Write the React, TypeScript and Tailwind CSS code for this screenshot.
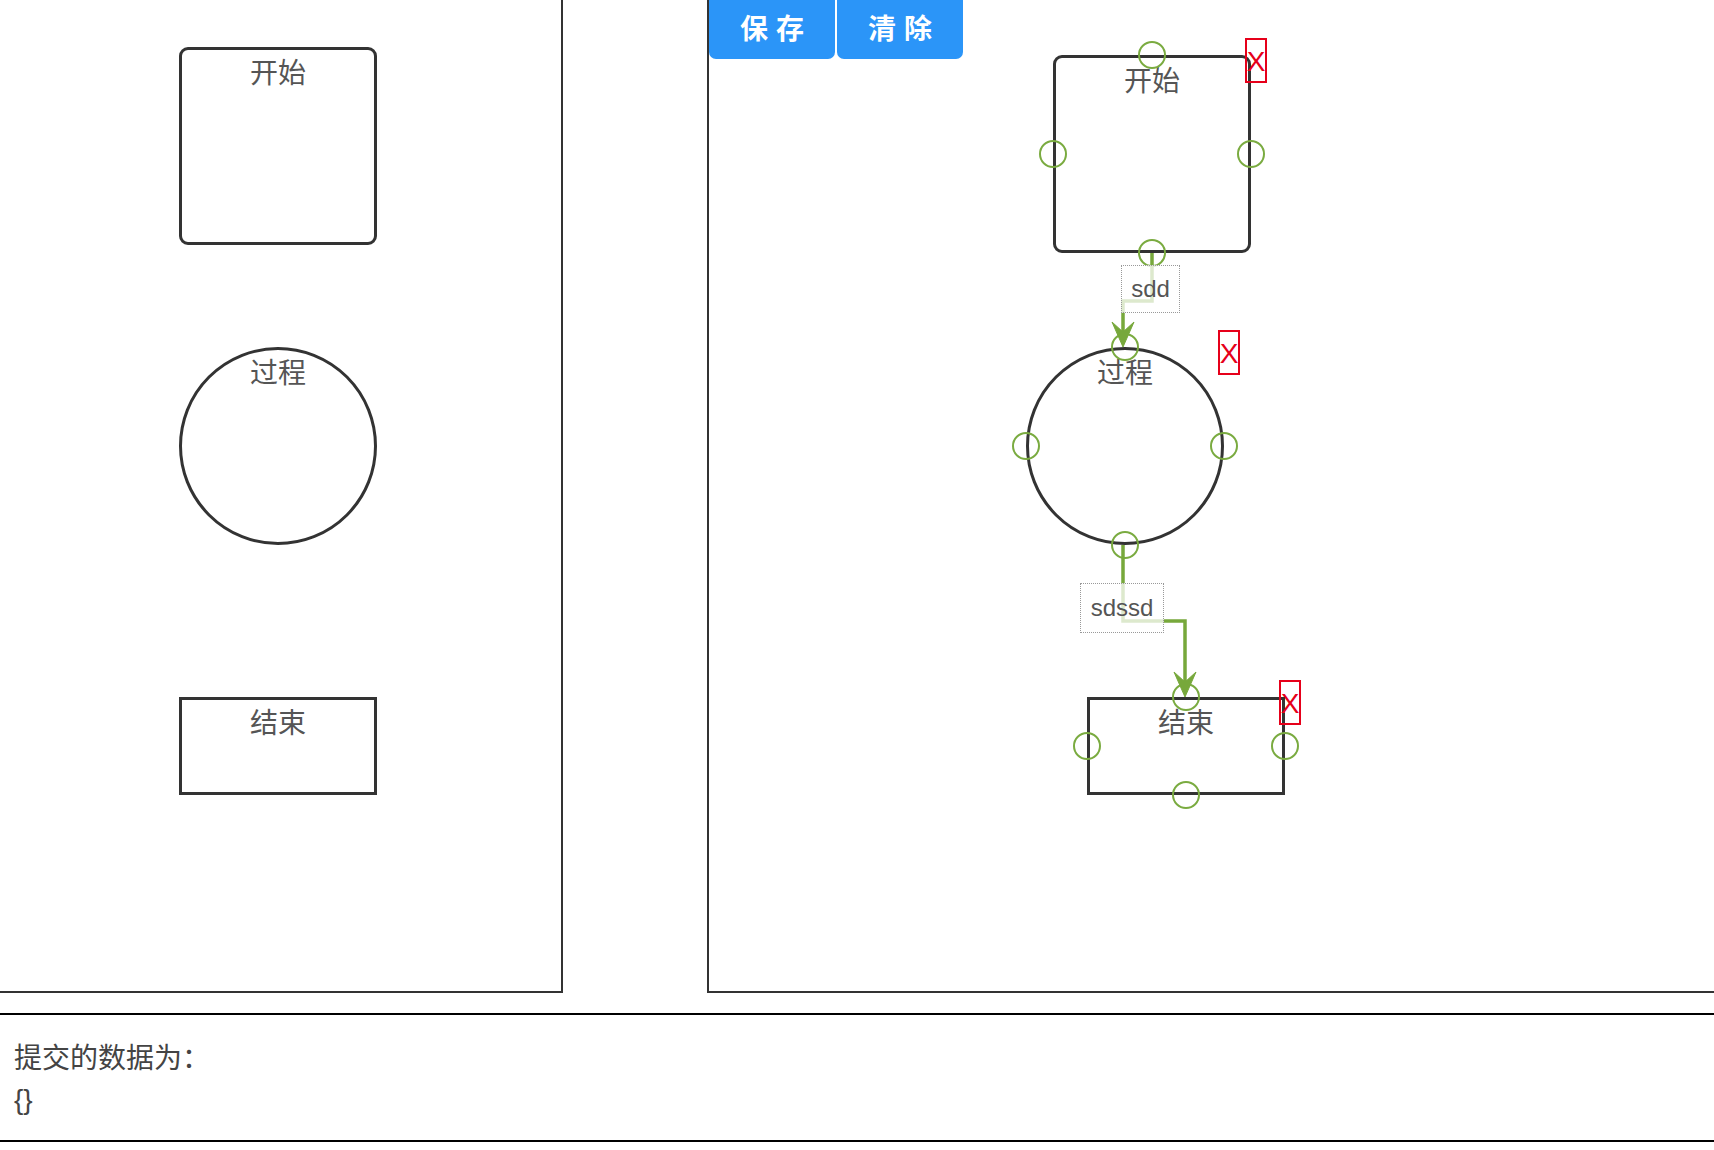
import React from "react";

const lineColor = "#77a83b";

function Anchor({ className }: { className: string }) {
	return (
		<div
			className={`absolute h-[28px] w-[28px] -translate-x-1/2 -translate-y-1/2 rounded-full border-2 border-[#7aab40] ${className}`}
		></div>
	);
}

function DeleteMark() {
	return (
		<div className="absolute left-[192px] top-[-17px] flex h-[45px] w-[22px] items-center justify-center border-2 border-[#e6001a] pt-[3px] text-[28px] leading-none text-[#e6001a]">
			X
		</div>
	);
}

interface NodeProps {
	label: string;
	shape: "square" | "circle" | "rect";
	className?: string;
	editable?: boolean;
}

function FlowNode({ label, shape, className = "", editable = false }: NodeProps) {
	const size = shape === "rect" ? "h-[98px] w-[198px]" : "h-[198px] w-[198px]";
	const outline =
		shape === "square"
			? "rounded-[9px]"
			: shape === "circle"
				? "rounded-full"
				: "";
	return (
		<div className={`relative shrink-0 ${size} ${className}`}>
			<div
				className={`absolute inset-0 border-[3px] border-[#333] pt-[3px] text-center text-[28px] leading-[1.5] text-[#555] ${outline}`}
			>
				{label}
			</div>
			{editable && (
				<>
					<Anchor className="left-1/2 top-0" />
					<Anchor className="left-0 top-1/2" />
					<Anchor className="left-full top-1/2" />
					<Anchor className="left-1/2 top-full" />
					<DeleteMark />
				</>
			)}
		</div>
	);
}

function Arrow({ x, y }: { x: number; y: number }) {
	return (
		<path
			d={`M${x},${y} L${x - 11},${y - 25} L${x},${y - 15} L${x + 11},${y - 25} Z`}
			fill={lineColor}
			stroke={lineColor}
			strokeWidth={1}
			strokeLinejoin="round"
		/>
	);
}

function Connectors() {
	return (
		<svg className="pointer-events-none absolute inset-0 h-full w-full overflow-visible">
			<path
				d="M443,253 L443,301 L414,301 L414,333"
				fill="none"
				stroke={lineColor}
				strokeWidth={3.5}
			/>
			<Arrow x={414} y={347} />
			<path
				d="M414,545 L414,621 L476,621 L476,683"
				fill="none"
				stroke={lineColor}
				strokeWidth={3.5}
			/>
			<Arrow x={476} y={697} />
		</svg>
	);
}

function EdgeLabel({ text, className }: { text: string; className: string }) {
	return (
		<div
			className={`absolute flex items-center justify-center border border-dotted border-[#999] bg-white/75 text-[24px] text-[#555] ${className}`}
		>
			{text}
		</div>
	);
}

export default function App() {
	return (
		<div className="min-h-screen bg-white font-['Liberation_Sans','Noto_Sans_CJK_SC',sans-serif]">
			<div className="flex h-[993px]">
				{/* palette */}
				<div className="flex w-[563px] shrink-0 flex-col border-b-2 border-r-2 border-[#333] pl-[179px] pt-[47px]">
					<FlowNode label="开始" shape="square" />
					<FlowNode label="过程" shape="circle" className="mt-[102px]" />
					<FlowNode label="结束" shape="rect" className="mt-[152px]" />
				</div>
				<div className="w-[144px] shrink-0"></div>
				{/* canvas */}
				<div className="relative flex-1 border-b-2 border-l-2 border-[#333]">
					<div className="flex gap-[2px]">
						<button className="flex h-[59px] w-[126px] items-center justify-center rounded-b-[7px] bg-[#2b95f8] text-[28px] font-bold text-white">
							保 存
						</button>
						<button className="flex h-[59px] w-[126px] items-center justify-center rounded-b-[7px] bg-[#2b95f8] text-[28px] font-bold text-white">
							清 除
						</button>
					</div>
					<FlowNode label="开始" shape="square" editable className="!absolute left-[344px] top-[55px]" />
					<FlowNode label="过程" shape="circle" editable className="!absolute left-[317px] top-[347px]" />
					<FlowNode label="结束" shape="rect" editable className="!absolute left-[378px] top-[697px]" />
					<Connectors />
					<EdgeLabel text="sdd" className="left-[412px] top-[265px] h-[48px] w-[59px]" />
					<EdgeLabel text="sdssd" className="left-[371px] top-[583px] h-[50px] w-[84px]" />
				</div>
			</div>
			<div className="mt-[20px] border-b-2 border-t-2 border-black pb-[20px] pl-[14px] pt-[23px] text-[28px] leading-[41px] text-[#444]">
				<p>提交的数据为：</p>
				<p>{"{}"}</p>
			</div>
		</div>
	);
}
